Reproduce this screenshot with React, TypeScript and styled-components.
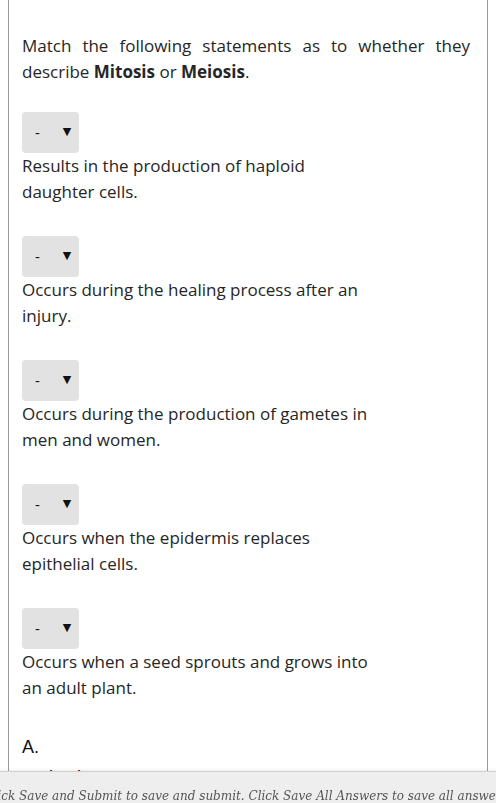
import React from "react";
import styled, { createGlobalStyle } from "styled-components";

const GlobalStyle = createGlobalStyle`
  html, body {
    margin: 0;
    padding: 0;
    background: #ffffff;
  }
  body {
    padding: 0 8px;
    font-family: "Open Sans", "Liberation Sans", sans-serif;
  }
`;

const Panel = styled.div`
  border-left: 1px solid #9a9a9a;
  border-right: 1px solid #9a9a9a;
  padding: 33px 17px 60px 13px;
  min-height: 760px;
  color: #262626;
`;

const Intro = styled.p`
  margin: 0;
  font-size: 17px;
  line-height: 26px;
  text-align: justify;
`;

const QuestionList = styled.div`
  display: flex;
  flex-direction: column;
  gap: 31px;
  margin-top: 27px;
`;

const Question = styled.div`
  display: flex;
  flex-direction: column;
`;

const SelectBox = styled.div`
  width: 57px;
  height: 41px;
  box-sizing: border-box;
  background: #e2e2e2;
  border-radius: 4px;
  display: flex;
  align-items: center;
  padding: 0 0 2px 13px;
  gap: 23px;
  color: #111111;
  font-size: 15px;
`;

const Arrow = styled.span`
  font-size: 11px;
  font-family: "DejaVu Sans", sans-serif;
`;

const Statement = styled.div`
  max-width: 356px;
  font-size: 17px;
  line-height: 26px;
`;

const Answers = styled.div`
  margin-top: 33px;
  font-family: "Liberation Sans", Arial, sans-serif;
  font-size: 18px;
  line-height: 26px;
  color: #111111;
`;

const AnswerItem = styled.div<{ indent?: boolean }>`
  padding-left: ${(p) => (p.indent ? "12px" : "0")};
  margin-top: ${(p) => (p.indent ? "4px" : "0")};
`;

const BottomBar = styled.div`
  position: fixed;
  left: 0;
  right: 0;
  bottom: -14px;
  height: 45px;
  background: #eeeeee;
  border-top: 1px solid #cfcfcf;
  box-shadow: 0 -1px 3px rgba(0, 0, 0, 0.08);
  display: flex;
  justify-content: center;
  overflow: hidden;
`;

const BarText = styled.div`
  white-space: nowrap;
  margin-top: 17px;
  font-family: "DejaVu Serif", "Liberation Serif", serif;
  font-style: italic;
  font-size: 12px;
  color: #555555;
`;

const statements = [
  "Results in the production of haploid daughter cells.",
  "Occurs during the healing process after an injury.",
  "Occurs during the production of gametes in men and women.",
  "Occurs when the epidermis replaces epithelial cells.",
  "Occurs when a seed sprouts and grows into an adult plant.",
];

export default function App() {
  return (
    <>
      <GlobalStyle />
      <Panel>
        <Intro>
          Match the following statements as to whether they describe <b>Mitosis</b> or{" "}
          <b>Meiosis</b>.
        </Intro>
        <QuestionList>
          {statements.map((s) => (
            <Question key={s}>
              <SelectBox>
                <span>-</span>
                <Arrow>▼</Arrow>
              </SelectBox>
              <Statement>{s}</Statement>
            </Question>
          ))}
        </QuestionList>
        <Answers>
          <AnswerItem>A.</AnswerItem>
          <AnswerItem indent>mitosis</AnswerItem>
          <AnswerItem>B.</AnswerItem>
          <AnswerItem indent>meiosis</AnswerItem>
        </Answers>
      </Panel>
      <BottomBar>
        <BarText>
          Click Save and Submit to save and submit. Click Save All Answers to save all answers.
        </BarText>
      </BottomBar>
    </>
  );
}
